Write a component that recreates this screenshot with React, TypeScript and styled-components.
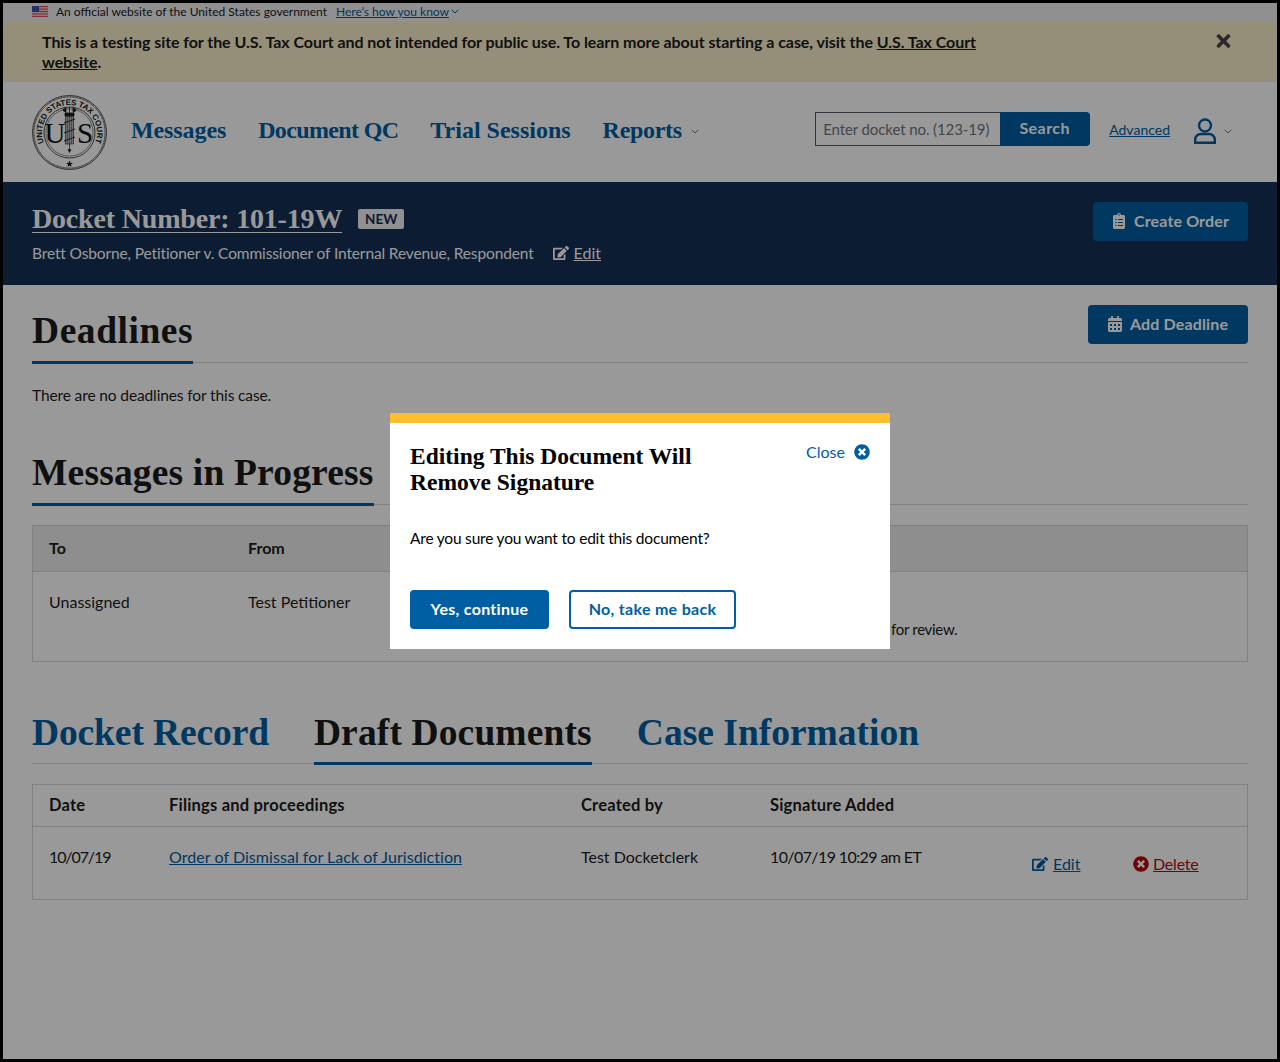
import React from "react";
import styled, { createGlobalStyle } from "styled-components";
import { FaTimes, FaEdit, FaClipboardList, FaCalendarAlt, FaTimesCircle } from "react-icons/fa";

const SANS = `"Lato", "Noto Sans", sans-serif`;
const SERIF = `"Liberation Serif", serif`;
const BLUE = "#005ea2";
const INK = "#1b1b1b";
const RULE = "#d6d7d9";

const Global = createGlobalStyle`
  html, body { margin: 0; padding: 0; background: #000; }
  * { box-sizing: border-box; }
  a { color: inherit; }
`;

const Page = styled.div`
  position: relative;
  width: 1280px;
  height: 1062px;
  border: 3px solid #000;
  background: #fff;
  overflow: hidden;
  color: ${INK};
  font: 400 16px/24px ${SANS};
`;

const GovBanner = styled.div`
  display: flex;
  align-items: center;
  height: 19px;
  padding: 0 0 2px 29px;
  background: #f0f0f0;
  font-size: 12px;
  line-height: 16px;
`;
const Flag = styled.svg`
  width: 16px;
  height: 11px;
  margin-right: 8px;
`;
const GovLink = styled.a`
  margin-left: 9px;
  color: ${BLUE};
  text-decoration: underline;
`;
const Chevron = styled.svg<{ $ml?: number; $mt?: number }>`
  width: 8px;
  height: 5px;
  margin-left: ${(p) => p.$ml ?? 2}px;
  margin-top: ${(p) => p.$mt ?? 0}px;
  flex: none;
`;

const Alert = styled.div`
  display: flex;
  justify-content: space-between;
  height: 60px;
  padding: 10px 46px 0 39px;
  background: #f8eecb;
  font-weight: 700;
  line-height: 20px;
  letter-spacing: -0.062px;
`;
const AlertClose = styled(FaTimes)`
  width: 15px;
  height: 20px;
  margin-top: -1px;
  color: #454545;
`;

const Header = styled.header`
  display: flex;
  align-items: center;
  height: 100px;
  padding: 0 45px 0 29px;
`;
const Seal = styled.svg`
  width: 75px;
  height: 75px;
  flex: none;
`;
const Nav = styled.nav`
  display: flex;
  align-items: center;
  gap: 32px;
  margin: 0 0 4px 24px;
`;
const NavItem = styled.span<{ $ls?: number }>`
  display: flex;
  align-items: center;
  font: 700 24px/32px ${SERIF};
  letter-spacing: ${(p) => p.$ls ?? 0}px;
  color: ${BLUE};
`;
const SearchGroup = styled.div`
  display: flex;
  align-items: center;
  margin: 0 0 6px auto;
`;
const SearchField = styled.div`
  display: flex;
  align-items: center;
  width: 185px;
  height: 34px;
  padding-left: 7px;
  border: 1px solid #565c65;
  border-right: 0;
  color: #71767a;
  font-size: 15px;
  letter-spacing: -0.1px;
  white-space: nowrap;
`;
const SearchButton = styled.div`
  display: flex;
  align-items: center;
  justify-content: center;
  width: 90px;
  height: 34px;
  padding: 0 1px 2px 0;
  border-radius: 0 4px 4px 0;
  background: ${BLUE};
  color: #fff;
  font-weight: 700;
  letter-spacing: 0.45px;
`;
const AdvancedLink = styled.a`
  margin: 2px 0 0 19px;
  color: ${BLUE};
  font-size: 14px;
  text-decoration: underline;
`;
const UserIcon = styled.svg`
  width: 24px;
  height: 26px;
  margin: 4px 0 0 23px;
`;

const DocketBar = styled.section`
  display: flex;
  justify-content: space-between;
  align-items: flex-start;
  height: 103px;
  padding: 20px 29px 0;
  background: #142f55;
  color: #fff;
`;
const DocketLeft = styled.div`
  display: flex;
  flex-direction: column;
`;
const TitleRow = styled.div`
  display: flex;
  align-items: center;
  height: 34px;
`;
const DocketTitle = styled.a`
  font: 700 28px/34px ${SERIF};
  letter-spacing: -0.18px;
  text-decoration: underline;
  text-decoration-thickness: 1px;
  text-underline-offset: 4px;
`;
const Badge = styled.span`
  display: inline-flex;
  align-items: center;
  justify-content: center;
  width: 46px;
  height: 20px;
  margin-left: 16px;
  border-radius: 2px;
  background: #f0f0f0;
  color: #112e51;
  font-size: 13.5px;
  font-weight: 700;
`;
const Subtitle = styled.div`
  display: flex;
  align-items: center;
  margin-top: 5px;
  font-size: 15.5px;
  letter-spacing: -0.135px;
`;
const EditLink = styled.a<{ $color?: string; $offset?: number; $ls?: number; $gap?: number }>`
  display: inline-flex;
  align-items: center;
  margin-left: ${(p) => p.$offset ?? 0}px;
  color: ${(p) => p.$color ?? "inherit"};
  font-size: 16px;
  letter-spacing: ${(p) => p.$ls ?? 0}px;
  svg { width: 16px; height: 16px; margin-right: ${(p) => p.$gap ?? 5}px; flex: none; }
  span { text-decoration: underline; }
`;
const ActionButton = styled.div<{ $width: number; $mb?: number }>`
  display: flex;
  align-items: center;
  justify-content: center;
  gap: 8px;
  width: ${(p) => p.$width}px;
  height: 39px;
  margin-bottom: ${(p) => p.$mb ?? 0}px;
  padding-bottom: 2px;
  border-radius: 4px;
  background: ${BLUE};
  color: #fff;
  font-weight: 700;
  letter-spacing: 0.15px;
  svg { width: 14px; height: 16px; }
`;

const Main = styled.main`
  padding: 0 29px;
`;
const SectionHead = styled.div<{ $top: number }>`
  display: flex;
  justify-content: space-between;
  align-items: flex-end;
  margin-top: ${(p) => p.$top}px;
  border-bottom: 1px solid ${RULE};
`;
const SectionTitle = styled.h2<{ $ls: number }>`
  margin: 0 0 -2px;
  padding: 1px 0 8px;
  border-bottom: 3px solid ${BLUE};
  font: 700 37.5px/44px ${SERIF};
  letter-spacing: ${(p) => p.$ls}px;
`;
const Paragraph = styled.p`
  margin: 20px 0 0;
  font-size: 15.5px;
  letter-spacing: -0.12px;
`;
const Table = styled.div<{ $top: number }>`
  margin-top: ${(p) => p.$top}px;
  border: 1px solid ${RULE};
`;
const Row = styled.div<{ $cols: string; $h: number; $shade?: boolean; $rule?: boolean }>`
  display: grid;
  grid-template-columns: ${(p) => p.$cols};
  height: ${(p) => p.$h}px;
  padding-left: 16px;
  background: ${(p) => (p.$shade ? "#ededed" : "transparent")};
  border-bottom: ${(p) => (p.$rule ? `1px solid ${RULE}` : "0")};
`;
const HeadCell = styled.div<{ $wide?: boolean }>`
  align-self: center;
  margin-top: -2px;
  font-size: ${(p) => (p.$wide ? 16.5 : 16)}px;
  font-weight: 700;
  letter-spacing: ${(p) => (p.$wide ? 0.2 : 0)}px;
`;
const Cell = styled.div<{ $top?: number; $ls?: number }>`
  padding-top: ${(p) => p.$top ?? 18}px;
  letter-spacing: ${(p) => p.$ls ?? 0}px;
  white-space: nowrap;
`;
const NoteCell = styled(Cell)`
  font-size: 15px;
`;
const DocLink = styled.a`
  color: ${BLUE};
  letter-spacing: 0.05px;
  text-decoration: underline;
`;
const Tabs = styled.div`
  display: flex;
  gap: 45px;
  margin-top: 48px;
  border-bottom: 1px solid ${RULE};
`;
const Tab = styled.div<{ $active?: boolean; $ls: number }>`
  margin-bottom: -2px;
  padding: 1px 0 7px;
  border-bottom: 3px solid ${(p) => (p.$active ? BLUE : "transparent")};
  color: ${(p) => (p.$active ? INK : BLUE)};
  font: 700 37.5px/44px ${SERIF};
  letter-spacing: ${(p) => p.$ls}px;
`;

const Overlay = styled.div`
  position: absolute;
  inset: 0;
  display: flex;
  align-items: center;
  justify-content: center;
  background: rgba(0, 0, 0, 0.4);
`;
const Modal = styled.div`
  width: 500px;
  height: 236px;
  padding: 20px;
  border-top: 10px solid #ffbe2e;
  background: #fff;
  color: #000;
`;
const ModalHead = styled.div`
  display: flex;
  justify-content: space-between;
  align-items: flex-start;
`;
const ModalTitle = styled.h3`
  margin: 0;
  font: 700 23.5px/26px ${SERIF};
`;
const CloseLink = styled.a`
  display: flex;
  align-items: center;
  gap: 9px;
  height: 18px;
  color: ${BLUE};
  svg { width: 16px; height: 16px; }
`;
const ModalBody = styled.p`
  margin: 31px 0 0;
  font-size: 15.5px;
  letter-spacing: -0.2px;
`;
const ModalActions = styled.div`
  display: flex;
  gap: 20px;
  margin-top: 40px;
`;
const ModalButton = styled.div<{ $outline?: boolean; $width: number }>`
  display: flex;
  align-items: center;
  justify-content: center;
  width: ${(p) => p.$width}px;
  height: 39px;
  padding-bottom: 2px;
  border: 2px solid ${BLUE};
  border-radius: 4px;
  background: ${(p) => (p.$outline ? "#fff" : BLUE)};
  color: ${(p) => (p.$outline ? BLUE : "#fff")};
  font-weight: 700;
  letter-spacing: 0.3px;
`;

const ChevronIcon = ({ ml, mt, color }: { ml?: number; mt?: number; color: string }) => (
  <Chevron $ml={ml} $mt={mt} viewBox="0 0 8 5" fill="none">
    <path d="M.7.8 4 4 7.3.8" stroke={color} strokeWidth="1" />
  </Chevron>
);

const FlagIcon = () => (
  <Flag viewBox="0 0 16 11">
    <rect width="16" height="11" fill="#fff" />
    {[0, 2, 4, 6, 8, 10, 12].map((y) => (
      <rect key={y} y={y * 0.846} width="16" height="0.846" fill="#c8313e" />
    ))}
    <rect width="7" height="5.9" fill="#2e4a9e" />
    {[1, 3, 5].map((x) =>
      [1, 3, 5].map((y) => <circle key={`${x}${y}`} cx={x + 0.2} cy={y} r="0.35" fill="#fff" />)
    )}
  </Flag>
);

const SealIcon = () => (
  <Seal viewBox="0 0 75 75">
    <defs>
      <path id="ring" d="M12 47.8A27.5 27.5 0 1 1 63 47.8" />
    </defs>
    <circle cx="37.5" cy="37.5" r="37" fill="#fff" stroke="#222" strokeWidth=".8" />
    <circle cx="37.5" cy="37.5" r="35.6" fill="none" stroke="#222" strokeWidth="1" strokeDasharray="1 .5" />
    <circle cx="37.5" cy="37.5" r="25.5" fill="none" stroke="#222" strokeWidth=".8" />
    <circle cx="37.5" cy="37.5" r="23.6" fill="none" stroke="#222" strokeWidth=".5" />
    <text fontFamily="Liberation Sans, sans-serif" fontSize="8" fontWeight="700" fill="#222">
      <textPath href="#ring" textLength="107">UNITED STATES TAX COURT</textPath>
    </text>
    <text x="12.5" y="48" fontFamily="Liberation Serif, serif" fontSize="29" fill="#111">U</text>
    <text x="45" y="48" fontFamily="Liberation Serif, serif" fontSize="29" fill="#111">S</text>
    <rect x="33.5" y="21" width="8" height="28" fill="#bbb" stroke="#222" strokeWidth=".6" />
    <path d="M35.5 21v28M37.5 21v28M39.5 21v28" stroke="#444" strokeWidth=".5" />
    <path d="M37.5 12v6M31 14.5l3 -2v5l-3 -2zM44 14.5l-3 -2v5l3 -2zM33 18h9v3h-9z" fill="#222" stroke="#222" strokeWidth=".8" />
    <path d="M32 28l11 -4M32 38l11 -4M32 46l11 -4" stroke="#222" strokeWidth="1" />
    <path d="M37.5 49v7M36 54.5l1.5 3 1.5-3z" fill="#222" stroke="#222" strokeWidth=".7" />
    <path d="M37.5 65.6l.9 2.2 2.4.1-1.9 1.5.7 2.3-2.1-1.3-2.1 1.3.7-2.3-1.9-1.5 2.4-.1z" fill="#111" />
  </Seal>
);

const cols1 = "199px 643px 1fr";
const cols2 = "120px 412px 189px 262px 101px 1fr";

export default function App() {
  return (
    <>
      <Global />
      <Page>
        <GovBanner>
          <FlagIcon />
          An official website of the United States government
          <GovLink>Here’s how you know</GovLink>
          <ChevronIcon color={BLUE} />
        </GovBanner>
        <Alert>
          <div>
            This is a testing site for the U.S. Tax Court and not intended for public use. To learn more about starting a case, visit the <a href="#a">U.S. Tax Court</a>
            <br />
            <a href="#a">website</a>.
          </div>
          <AlertClose />
        </Alert>
        <Header>
          <SealIcon />
          <Nav>
            <NavItem $ls={-0.1}>Messages</NavItem>
            <NavItem $ls={-0.65}>Document QC</NavItem>
            <NavItem>Trial Sessions</NavItem>
            <NavItem $ls={-0.3}>
              Reports
              <ChevronIcon ml={9} mt={3} color="#71767a" />
            </NavItem>
          </Nav>
          <SearchGroup>
            <SearchField>Enter docket no. (123-19)</SearchField>
            <SearchButton>Search</SearchButton>
            <AdvancedLink>Advanced</AdvancedLink>
            <UserIcon viewBox="0 0 24 26" fill="none" stroke={BLUE} strokeWidth="2.4">
              <circle cx="12" cy="7.5" r="6" />
              <path d="M2.2 24.8v-3.3a5.5 5.5 0 0 1 5.5-5.5h8.6a5.5 5.5 0 0 1 5.5 5.5v3.3z" />
            </UserIcon>
            <ChevronIcon ml={7} mt={4} color="#71767a" />
          </SearchGroup>
        </Header>
        <DocketBar>
          <DocketLeft>
            <TitleRow>
              <DocketTitle>Docket Number: 101-19W</DocketTitle>
              <Badge>NEW</Badge>
            </TitleRow>
            <Subtitle>
              Brett Osborne, Petitioner v. Commissioner of Internal Revenue, Respondent
              <EditLink $offset={19}>
                <FaEdit />
                <span>Edit</span>
              </EditLink>
            </Subtitle>
          </DocketLeft>
          <ActionButton $width={155}>
            <FaClipboardList />
            Create Order
          </ActionButton>
        </DocketBar>
        <Main>
          <SectionHead $top={20}>
            <SectionTitle $ls={0.55}>Deadlines</SectionTitle>
            <ActionButton $width={160} $mb={18}>
              <FaCalendarAlt />
              Add Deadline
            </ActionButton>
          </SectionHead>
          <Paragraph>There are no deadlines for this case.</Paragraph>
          <SectionHead $top={43}>
            <SectionTitle $ls={0.17}>Messages in Progress</SectionTitle>
          </SectionHead>
          <Table $top={20}>
            <Row $cols={cols1} $h={46} $shade $rule>
              <HeadCell>To</HeadCell>
              <HeadCell>From</HeadCell>
            </Row>
            <Row $cols={cols1} $h={89}>
              <Cell>Unassigned</Cell>
              <Cell>Test Petitioner</Cell>
              <NoteCell $top={45} $ls={-0.3}>for review.</NoteCell>
            </Row>
          </Table>
          <Tabs>
            <Tab $ls={-0.12}>Docket Record</Tab>
            <Tab $active $ls={0.13}>Draft Documents</Tab>
            <Tab $ls={0}>Case Information</Tab>
          </Tabs>
          <Table $top={20}>
            <Row $cols={cols2} $h={42} $rule>
              <HeadCell $wide>Date</HeadCell>
              <HeadCell $wide>Filings and proceedings</HeadCell>
              <HeadCell $wide>Created by</HeadCell>
              <HeadCell $wide>Signature Added</HeadCell>
            </Row>
            <Row $cols={cols2} $h={72}>
              <Cell $ls={-1.1}>10/07/19</Cell>
              <Cell>
                <DocLink>Order of Dismissal for Lack of Jurisdiction</DocLink>
              </Cell>
              <Cell>Test Docketclerk</Cell>
              <Cell $ls={-0.6}>10/07/19 10:29 am ET</Cell>
              <Cell $top={25}>
                <EditLink $color={BLUE}>
                  <FaEdit />
                  <span>Edit</span>
                </EditLink>
              </Cell>
              <Cell $top={25}>
                <EditLink $color="#b50909" $ls={-0.2} $gap={4}>
                  <FaTimesCircle />
                  <span>Delete</span>
                </EditLink>
              </Cell>
            </Row>
          </Table>
        </Main>
        <Overlay>
          <Modal>
            <ModalHead>
              <ModalTitle>
                Editing This Document Will
                <br />
                Remove Signature
              </ModalTitle>
              <CloseLink>
                Close
                <FaTimesCircle />
              </CloseLink>
            </ModalHead>
            <ModalBody>Are you sure you want to edit this document?</ModalBody>
            <ModalActions>
              <ModalButton $width={139}>Yes, continue</ModalButton>
              <ModalButton $width={167} $outline>No, take me back</ModalButton>
            </ModalActions>
          </Modal>
        </Overlay>
      </Page>
    </>
  );
}
